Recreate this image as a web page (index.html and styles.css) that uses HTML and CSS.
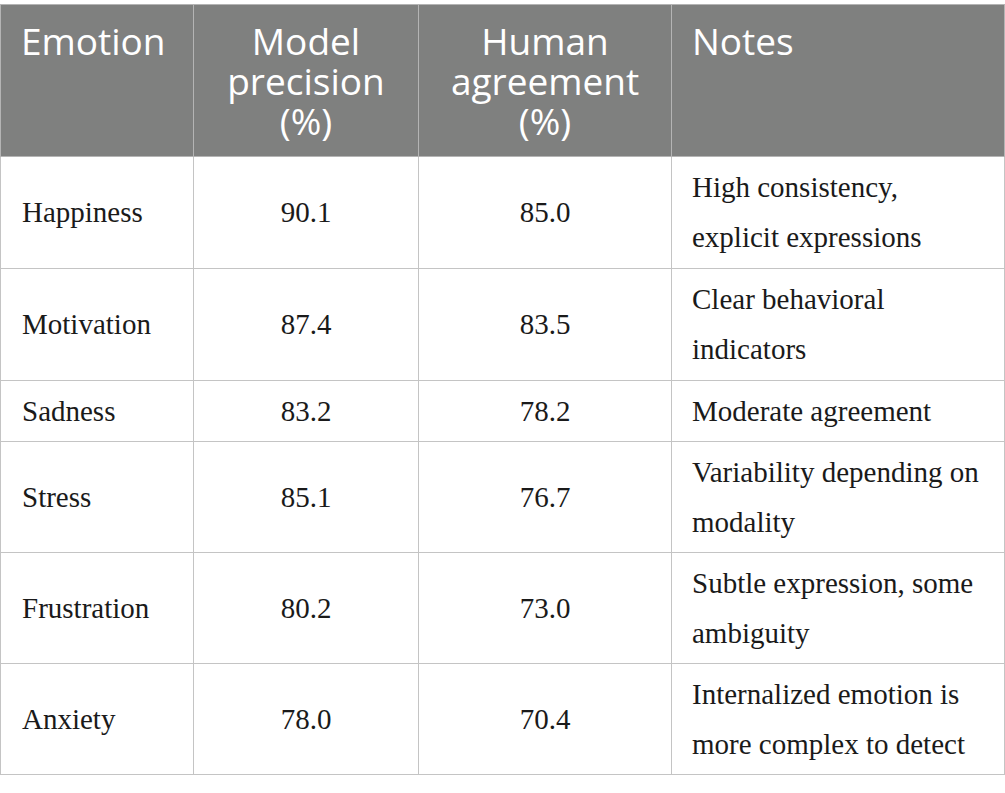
FILE: index.html
```html
<!DOCTYPE html>
<html lang="en">
<head>
<meta charset="utf-8">
<title>Emotion precision table</title>
<link rel="stylesheet" href="styles.css">
</head>
<body>
<table class="results">
  <colgroup>
    <col class="c-emotion">
    <col class="c-model">
    <col class="c-human">
    <col class="c-notes">
  </colgroup>
  <thead>
    <tr>
      <th class="left">Emotion</th>
      <th class="center"><span class="hl">Model</span><span class="hl">precision</span><span class="hl">(%)</span></th>
      <th class="center"><span class="hl">Human</span><span class="hl">agreement</span><span class="hl">(%)</span></th>
      <th class="left">Notes</th>
    </tr>
  </thead>
  <tbody>
    <tr class="tall">
      <td>Happiness</td>
      <td class="num">90.1</td>
      <td class="num">85.0</td>
      <td class="note">High consistency,<br>explicit expressions</td>
    </tr>
    <tr class="tall">
      <td>Motivation</td>
      <td class="num">87.4</td>
      <td class="num">83.5</td>
      <td class="note">Clear behavioral<br>indicators</td>
    </tr>
    <tr>
      <td>Sadness</td>
      <td class="num">83.2</td>
      <td class="num">78.2</td>
      <td class="note">Moderate agreement</td>
    </tr>
    <tr>
      <td>Stress</td>
      <td class="num">85.1</td>
      <td class="num">76.7</td>
      <td class="note">Variability depending on<br>modality</td>
    </tr>
    <tr>
      <td>Frustration</td>
      <td class="num">80.2</td>
      <td class="num">73.0</td>
      <td class="note">Subtle expression, some<br>ambiguity</td>
    </tr>
    <tr>
      <td>Anxiety</td>
      <td class="num">78.0</td>
      <td class="num">70.4</td>
      <td class="note">Internalized emotion is<br>more complex to detect</td>
    </tr>
  </tbody>
</table>
</body>
</html>
```
FILE: styles.css
```css
html, body {
  margin: 0;
  padding: 0;
  background: #ffffff;
}

.results {
  margin-top: 4px;
  width: 1004px;
  border-collapse: collapse;
  table-layout: fixed;
}

.c-emotion { width: 193px; }
.c-model { width: 225px; }
.c-human { width: 253px; }
.c-notes { width: 333px; }

.results th {
  background: #7f807f;
  color: #ffffff;
  font-family: "Open Sans", "Noto Sans", sans-serif;
  font-weight: 400;
  font-size: 37px;
  line-height: 40px;
  padding: 16px 20px 15px;
  vertical-align: top;
  border: 1px solid #b4b4b4;
}

.results th .hl {
  display: block;
  height: 40px;
}

.results th.left { text-align: left; }
.results th.center { text-align: center; }

.results td {
  font-family: "Liberation Serif", "Times New Roman", serif;
  font-size: 29px;
  line-height: 50px;
  color: #1a1a1a;
  padding: 5px 20px 5px 21px;
  vertical-align: middle;
  text-align: left;
  border: 1px solid #c4c4c4;
  white-space: nowrap;
}

.results tr.tall td { padding-bottom: 6px; }

.results td.num { text-align: center; padding-left: 20px; }
.results td.note { padding-left: 20px; padding-right: 10px; }
```
